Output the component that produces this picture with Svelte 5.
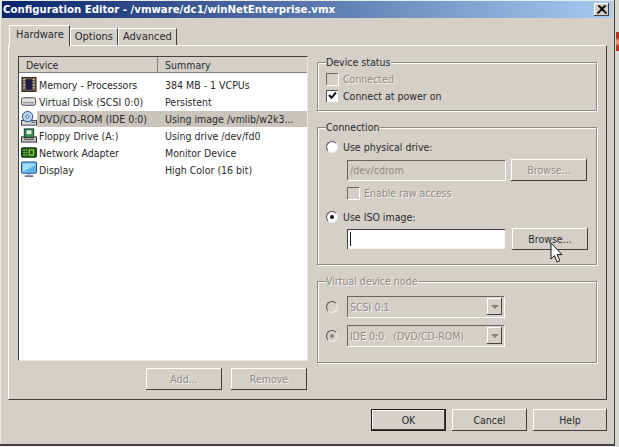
<script lang="ts">
  // VMware configuration editor, hardware tab.
  const devices = [
    { icon: 'memory', name: 'Memory - Processors', summary: '384 MB - 1 VCPUs' },
    { icon: 'disk', name: 'Virtual Disk (SCSI 0:0)', summary: 'Persistent' },
    { icon: 'dvd', name: 'DVD/CD-ROM (IDE 0:0)', summary: 'Using image /vmlib/w2k3...', selected: true },
    { icon: 'floppy', name: 'Floppy Drive (A:)', summary: 'Using drive /dev/fd0' },
    { icon: 'network', name: 'Network Adapter', summary: 'Monitor Device' },
    { icon: 'display', name: 'Display', summary: 'High Color (16 bit)' }
  ];
</script>

<div class="desktop">
  <div class="window">
    <div class="titlebar">
      <span class="title">Configuration Editor - /vmware/dc1/winNetEnterprise.vmx</span>
      <span class="close" aria-label="Close">
        <svg width="10" height="9" viewBox="0 0 10 9"><path d="M1 0.5 L9 8.5 M2.3 0.5 L10 8.5 M9 0.5 L1 8.5 M7.7 0.5 L0 8.5" stroke="#111" stroke-width="1.1" fill="none" /></svg>
      </span>
    </div>

    <div class="tabs">
      <span class="tab active">Hardware</span>
      <span class="tab">Options</span>
      <span class="tab">Advanced</span>
    </div>

    <div class="panel">
      <div class="left">
        <div class="list">
          <div class="list-head">
            <span class="col-device">Device</span>
            <span class="col-summary">Summary</span>
          </div>
          <div class="rows">
            {#each devices as d}
              <div class="row">
                <span class="icon">
                  {#if d.icon === 'memory'}
                    <svg width="17" height="17" viewBox="0 0 17 17">
                      <rect x="1" y="1" width="15" height="15" fill="#6a5a4c" stroke="#2a2622" />
                      <rect x="5" y="3" width="7" height="11" fill="#1e1a40" />
                      <path d="M2.5 3h2M2.5 6h2M2.5 9h2M2.5 12h2M12.5 3h2M12.5 6h2M12.5 9h2M12.5 12h2" stroke="#d8c890" stroke-width="1.4" />
                    </svg>
                  {:else if d.icon === 'disk'}
                    <svg width="17" height="17" viewBox="0 0 17 17">
                      <rect x="0.5" y="4.5" width="15" height="8" rx="2" fill="#e4e2dc" stroke="#3a3a3e" />
                      <path d="M2 9.5h12" stroke="#8a8a90" />
                      <path d="M2 11h12" stroke="#b8b8bc" />
                    </svg>
                  {:else if d.icon === 'dvd'}
                    <svg width="17" height="17" viewBox="0 0 17 17">
                      <rect x="0.5" y="10.5" width="16" height="5" fill="#d8d8d8" stroke="#30384a" />
                      <circle cx="7" cy="6.5" r="5.5" fill="#b8d4f0" stroke="#1c3c78" />
                      <circle cx="7" cy="6.5" r="1.6" fill="#fff" stroke="#1c3c78" stroke-width="0.8" />
                      <path d="M11 12.5h4" stroke="#30384a" />
                    </svg>
                  {:else if d.icon === 'floppy'}
                    <svg width="17" height="17" viewBox="0 0 17 17">
                      <rect x="0.5" y="10" width="16" height="5.5" fill="#c8c8c4" stroke="#2a2a2a" />
                      <rect x="3.5" y="1.5" width="10" height="9" fill="#3f8f58" stroke="#16381f" />
                      <rect x="6" y="3" width="5" height="4" fill="#e8efe4" />
                      <path d="M3 12.5h11" stroke="#333" />
                    </svg>
                  {:else if d.icon === 'network'}
                    <svg width="17" height="17" viewBox="0 0 17 17">
                      <rect x="0.5" y="3.5" width="16" height="10" rx="1" fill="#1d5a1a" stroke="#0c2a0c" />
                      <rect x="8" y="5" width="6" height="7" fill="#88c040" />
                      <rect x="9.5" y="6.5" width="3" height="4" fill="#1d5a1a" />
                      <path d="M2.5 6h4M2.5 8.5h4M2.5 11h4" stroke="#a8d860" stroke-width="1.2" stroke-dasharray="1.5 1" />
                    </svg>
                  {:else}
                    <svg width="17" height="17" viewBox="0 0 17 17">
                      <rect x="0.5" y="0.5" width="16" height="12" rx="1" fill="#5fb8ec" stroke="#1c4a80" />
                      <rect x="2" y="2" width="13" height="9" fill="#9edcf6" />
                      <path d="M2 11 L15 4 V11Z" fill="#58b4e8" />
                      <path d="M4 15.5h9" stroke="#4a5870" stroke-width="1.6" />
                      <path d="M7 13h3v2h-3z" fill="#a0acbc" />
                    </svg>
                  {/if}
                </span>
                <span class="cells" class:selected={d.selected}>
                  <span class="name">{d.name}</span>
                  <span class="summary">{d.summary}</span>
                </span>
              </div>
            {/each}
          </div>
        </div>
        <div class="list-actions">
          <span class="btn disabled">Add...</span>
          <span class="btn disabled">Remove</span>
        </div>
      </div>

      <div class="right">
        <fieldset class="status">
          <legend>Device status</legend>
          <div class="opt disabled"><span class="check"></span>Connected</div>
          <div class="opt">
            <span class="check">
              <svg width="9" height="9" viewBox="0 0 9 9"><path d="M1 4 L3.5 6.8 L8 1.5" stroke="#111" stroke-width="2" fill="none" /></svg>
            </span>
            Connect at power on
          </div>
        </fieldset>

        <fieldset class="connection">
          <legend>Connection</legend>
          <div class="opt"><span class="radio"></span>Use physical drive:</div>
          <div class="indent file-row">
            <span class="input off">/dev/cdrom</span>
            <span class="btn disabled">Browse...</span>
          </div>
          <div class="indent opt disabled raw"><span class="check"></span>Enable raw access</div>
          <div class="opt iso"><span class="radio on"></span>Use ISO image:</div>
          <div class="indent file-row iso-row">
            <span class="input"><span class="caret"></span></span>
            <span class="btn">Browse...</span>
          </div>
        </fieldset>

        <fieldset class="node disabled">
          <legend>Virtual device node</legend>
          <div class="node-row">
            <span class="radio off"></span>
            <span class="combo"><span>SCSI 0:1</span><span class="arrow"></span></span>
          </div>
          <div class="node-row">
            <span class="radio off on"></span>
            <span class="combo"><span>IDE 0:0 &nbsp; (DVD/CD-ROM)</span><span class="arrow"></span></span>
          </div>
        </fieldset>
      </div>
    </div>

    <div class="footer">
      <span class="btn default">OK</span>
      <span class="btn">Cancel</span>
      <span class="btn">Help</span>
    </div>
  </div>

  <div class="outside"><span class="red"></span></div>

  <svg class="cursor" width="14" height="23" viewBox="0 0 14 23">
    <path d="M1 1 L1 17 L4.5 13.6 L7 20 L9.8 18.8 L7.2 12.6 L12 12.6 Z" fill="#fff" stroke="#111" />
  </svg>
</div>

<style>
  :global(body) {
    margin: 0;
    background: #f4f4f2;
  }

  .desktop {
    position: relative;
    display: flex;
    width: 619px;
    height: 447px;
    overflow: hidden;
    font-family: "DejaVu Sans Condensed", "DejaVu Sans", sans-serif;
    font-stretch: condensed;
    font-size: 10.5px;
    color: #2a2a2a;
  }

  .window {
    box-sizing: border-box;
    width: 615px;
    height: 446px;
    padding: 1px 2px 0 2px;
    background: #d4d0c8;
    border-right: 1px solid #404040;
    border-bottom: 2px solid #404040;
    box-shadow: inset 1px 1px 0 #ecebe6;
  }

  .outside {
    flex: 1;
    padding: 32px 0 0 1px;
    background: #d8d6d0;
  }

  .red {
    display: block;
    height: 19px;
    background: linear-gradient(#b8341e 30%, #e89470 45%, #e89470 60%, #b8341e 75%);
  }

  .titlebar {
    display: flex;
    align-items: center;
    justify-content: space-between;
    height: 17px;
    padding: 0 3px 0 1px;
    background: linear-gradient(90deg, #0a246a, #a6caf0);
  }

  .title {
    color: #fff;
    font-size: 11.3px;
    font-weight: bold;
    white-space: nowrap;
  }

  .close {
    box-sizing: border-box;
    display: flex;
    align-items: center;
    justify-content: center;
    width: 15px;
    height: 13px;
    background: #d4d0c8;
    box-shadow: inset -1px -1px 0 #404040, inset 1px 1px 0 #fff;
  }

  .tabs {
    display: flex;
    align-items: flex-end;
    height: 27px;
    padding-left: 7px;
    font-size: 11px;
  }

  .tab {
    box-sizing: border-box;
    height: 17px;
    padding: 1px 4px 0 4px;
    border-top: 1px solid #fff;
    border-left: 1px solid #fff;
    border-right: 1px solid #404040;
  }

  .tab.active {
    position: relative;
    height: 21px;
    margin-bottom: -1px;
    padding: 2px 5px 0 6px;
    background: #d4d0c8;
  }

  .panel {
    box-sizing: border-box;
    display: flex;
    width: 599px;
    height: 355px;
    margin-left: 6px;
    padding: 10px 9px 0 9px;
    border-top: 1px solid #fff;
    border-left: 1px solid #fff;
    border-right: 1px solid #404040;
    border-bottom: 1px solid #404040;
  }

  .left {
    width: 290px;
    margin-right: 9px;
  }

  .list {
    box-sizing: border-box;
    width: 290px;
    height: 305px;
    background: #fff;
    border-top: 1px solid #404040;
    border-left: 1px solid #404040;
    border-right: 1px solid #e8e8e4;
    border-bottom: 1px solid #e8e8e4;
  }

  .list-head {
    display: flex;
    box-sizing: border-box;
    height: 16px;
    line-height: 16px;
    background: #d4d0c8;
    border-bottom: 1px solid #808080;
  }

  .col-device {
    box-sizing: border-box;
    width: 139px;
    padding-left: 7px;
    border-right: 1px solid #808080;
  }

  .col-summary {
    padding-left: 7px;
  }

  .rows {
    padding-top: 3px;
  }

  .row {
    display: flex;
    align-items: center;
    height: 17px;
  }

  .icon {
    display: flex;
    flex: none;
    width: 16px;
    padding-left: 2px;
  }

  .cells {
    display: flex;
    flex: 1;
    height: 16px;
    line-height: 16px;
    padding-left: 2px;
    white-space: nowrap;
  }

  .cells.selected {
    background: #c9c5bd;
  }

  .name {
    width: 126px;
  }

  .list-actions {
    display: flex;
    justify-content: flex-end;
    gap: 9px;
    margin-top: 7px;
    padding-right: 1px;
  }

  .btn {
    box-sizing: border-box;
    display: flex;
    align-items: center;
    justify-content: center;
    width: 76px;
    height: 22px;
    background: #d4d0c8;
    box-shadow: inset -1px -1px 0 #404040, inset 1px 1px 0 #fff;
  }

  .btn.disabled,
  .disabled {
    color: #8e8c86;
    text-shadow: 1px 1px 0 #f4f3ef;
  }

  .btn.default {
    outline: 1px solid #1a1a1a;
    outline-offset: -1px;
    box-shadow: inset -2px -2px 0 #404040, inset 2px 2px 0 #fff;
  }

  .right {
    width: 280px;
    margin-top: -1px;
  }

  fieldset {
    box-sizing: border-box;
    width: 280px;
    margin: 0 0 9px 0;
    padding: 0 8px;
    border: 1px solid #8c8a84;
    box-shadow: 1px 1px 0 #fff, inset 1px 1px 0 #fff;
  }

  legend {
    margin-left: 0;
    padding: 0 1px 0 0;
    background: #d4d0c8;
    line-height: 14px;
  }

  .status {
    height: 56px;
    padding-top: 1px;
  }

  .connection {
    height: 145px;
  }

  .node {
    height: 89px;
  }

  .opt {
    display: flex;
    align-items: center;
    height: 17px;
    gap: 5px;
  }

  .check {
    box-sizing: border-box;
    display: flex;
    align-items: center;
    justify-content: center;
    flex: none;
    width: 12px;
    height: 12px;
    background: #fff;
    box-shadow: inset 1px 1px 0 #505050;
  }

  .disabled .check {
    background: #d4d0c8;
    box-shadow: inset 1px 1px 0 #666, 1px 1px 0 #fff;
  }

  .radio {
    box-sizing: border-box;
    display: flex;
    align-items: center;
    justify-content: center;
    flex: none;
    width: 12px;
    height: 12px;
    border-radius: 50%;
    background: #fff;
    border: 1px solid;
    border-color: #505050 #eee #eee #505050;
  }

  .radio.on::after {
    content: "";
    width: 4px;
    height: 4px;
    border-radius: 50%;
    background: #111;
  }

  .radio.off {
    background: #d4d0c8;
  }

  .radio.off.on::after {
    background: #808080;
  }

  .connection .opt:first-of-type {
    margin-top: 4px;
  }

  .indent {
    margin-left: 21px;
  }

  .file-row {
    display: flex;
    align-items: center;
    gap: 6px;
    height: 22px;
    margin-top: 4px;
  }

  .input {
    box-sizing: border-box;
    display: flex;
    align-items: center;
    width: 158px;
    height: 20px;
    padding-left: 3px;
    background: #fff;
    box-shadow: inset 1px 1px 0 #404040, inset -1px -1px 0 #f4f4f0;
  }

  .input.off {
    color: #8e8c86;
    background: #d4d0c8;
    box-shadow: inset 1px 1px 0 #666, 1px 1px 0 #fff;
  }

  .caret {
    width: 1px;
    height: 14px;
    background: #111;
  }

  .raw {
    margin-top: 3px;
  }

  .iso {
    margin-top: 7px;
  }

  .iso-row {
    margin-top: 3px;
    gap: 7px;
  }

  .node-row {
    display: flex;
    align-items: center;
    gap: 9px;
    height: 21px;
    margin-top: 8px;
  }

  .combo {
    box-sizing: border-box;
    display: flex;
    align-items: center;
    justify-content: space-between;
    width: 157px;
    height: 21px;
    padding: 0 2px 0 3px;
    box-shadow: inset 1px 1px 0 #666, 1px 1px 0 #fff;
  }

  .arrow {
    display: flex;
    align-items: center;
    justify-content: center;
    width: 15px;
    height: 17px;
    box-shadow: inset -1px -1px 0 #404040, inset 1px 1px 0 #fff;
  }

  .arrow::after {
    content: "";
    border-left: 4px solid transparent;
    border-right: 4px solid transparent;
    border-top: 4px solid #808080;
  }

  .footer {
    display: flex;
    justify-content: flex-end;
    gap: 6px;
    margin-top: 9px;
    padding-right: 5px;
  }

  .footer .btn {
    width: 75px;
  }

  .footer .btn:last-child {
    width: 74px;
  }

  .cursor {
    position: absolute;
    left: 550px;
    top: 242px;
  }
</style>
